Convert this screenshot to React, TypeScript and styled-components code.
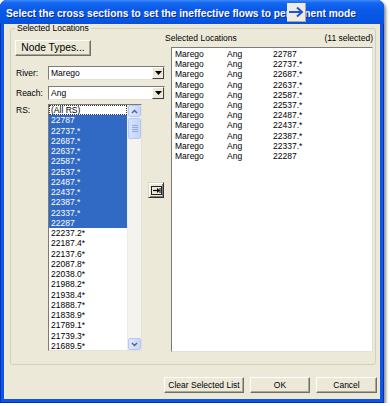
import React from "react";
import styled, { createGlobalStyle } from "styled-components";

const GlobalStyle = createGlobalStyle`
  * { box-sizing: border-box; }
  html, body { margin: 0; padding: 0; background: #ffffff; }
  body { font-family: "Liberation Sans", Arial, sans-serif; color: #000; }
`;

const xpBlue = "#0a56e6";
const face = "#ece9d8";

const Window = styled.div`
  position: relative;
  width: 384px;
  height: 403px;
  display: flex;
  flex-direction: column;
  background: ${xpBlue};
  border-radius: 7px 7px 0 0;
  box-shadow: inset 1px 0 #0b2fa8, inset -1px 0 #0b2fa8, inset 0 -1px #0b2fa8,
    2px 2px 3px rgba(0, 0, 0, 0.45);
`;

const TitleBar = styled.div`
  height: 24px;
  padding: 4px 0 0 6px;
  border-radius: 7px 7px 0 0;
  background: linear-gradient(
    #3d8cff 0%,
    #1567f0 12%,
    #0a5ae8 40%,
    #0656e4 80%,
    #0a4fd6 100%
  );
  color: #fff;
  font-size: 10.2px;
  font-weight: bold;
  line-height: 20px;
  white-space: nowrap;
  text-shadow: 1px 1px #0a2a9a;
`;

const TitleArrow = styled.div`
  position: absolute;
  left: 287px;
  top: 3px;
  width: 19px;
  height: 19px;
  display: flex;
  align-items: center;
  justify-content: center;
  background: #eeece3;
  border-right: 1px solid #a8a69b;
  border-bottom: 1px solid #a8a69b;
`;

const Client = styled.div`
  flex: 1;
  margin: 0 4px 4px 4px;
  padding: 0 3px 6px 6px;
  background: ${face};
  display: flex;
  flex-direction: column;
`;

const Group = styled.fieldset`
  flex: 1;
  margin: 0 1px 0 0;
  padding: 0 2px 12px 4px;
  min-width: 0;
  border: 1px solid #d0d0bf;
  border-radius: 3px;
  display: flex;
  flex-direction: column;
`;

const Legend = styled.legend`
  padding: 0 2px;
  font-size: 8.5px;
  line-height: 9px;
`;

const Inner = styled.div`
  flex: 1;
  display: flex;
`;

const LeftPanel = styled.div`
  width: 150px;
  display: flex;
  flex-direction: column;
`;

const RightPanel = styled.div`
  flex: 1;
  display: flex;
  flex-direction: column;
`;

const Button = styled.button<{ $w: number; $big?: boolean }>`
  width: ${(p) => p.$w}px;
  height: 16px;
  padding: 0;
  margin: 0;
  font-family: "Liberation Sans", Arial, sans-serif;
  font-size: ${(p) => (p.$big ? "10.3px" : "8.5px")};
  line-height: 14px;
  color: #000;
  background: ${face};
  border: 1px solid;
  border-color: #ffffff #716f64 #716f64 #ffffff;
  box-shadow: inset -1px -1px #aca899;
`;

const NodeButton = styled(Button)`
  margin-top: 7px;
`;

const FieldRow = styled.div<{ $gap: number }>`
  display: flex;
  align-items: center;
  height: 14px;
  margin-top: ${(p) => p.$gap}px;
`;

const Label = styled.div`
  width: 33px;
  padding-left: 1px;
  font-size: 8.5px;
  line-height: 10px;
`;

const Combo = styled.div`
  width: 117px;
  height: 14px;
  display: flex;
  align-items: center;
  background: #fff;
  border: 1px solid;
  border-color: #7b7b7b #e4e2d8 #e4e2d8 #7b7b7b;
`;

const ComboText = styled.div`
  flex: 1;
  padding-left: 2px;
  font-size: 8.5px;
  line-height: 12px;
`;

const ComboButton = styled.div`
  width: 12px;
  height: 12px;
  display: flex;
  align-items: center;
  justify-content: center;
  background: ${face};
  border: 1px solid;
  border-color: #ffffff #404040 #404040 #ffffff;
`;

const RsRow = styled.div`
  display: flex;
  align-items: flex-start;
  margin-top: 4px;
`;

const RsLabel = styled(Label)`
  margin-top: 1px;
`;

const ListBox = styled.div<{ $h?: number }>`
  display: flex;
  background: #fff;
  border: 1px solid;
  border-color: #7b7b7b #e4e2d8 #e4e2d8 #7b7b7b;
  ${(p) => (p.$h ? `height: ${p.$h}px;` : "")}
`;

const LeftList = styled(ListBox)`
  width: 94px;
`;

const Items = styled.div`
  flex: 1;
  display: flex;
  flex-direction: column;
`;

const Item = styled.div<{ $sel?: boolean; $focus?: boolean }>`
  height: 10.25px;
  padding-left: 2px;
  font-size: 8.5px;
  line-height: 10.25px;
  white-space: nowrap;
  color: ${(p) => (p.$sel ? "#fff" : "#000")};
  background: ${(p) => (p.$sel ? "#316ac5" : "transparent")};
  outline: ${(p) => (p.$focus ? "1px dotted #333" : "none")};
  outline-offset: -1px;
`;

const ScrollBar = styled.div`
  width: 14px;
  display: flex;
  flex-direction: column;
  background: #f4f3ee;
  border-left: 1px solid #eeede5;
`;

const ScrollBtn = styled.div`
  height: 12px;
  display: flex;
  align-items: center;
  justify-content: center;
  background: linear-gradient(90deg, #dfe8fd, #c6d5fb);
  border: 1px solid #b5c8f4;
  border-radius: 2px;
`;

const Thumb = styled.div`
  height: 21px;
  margin-top: 1px;
  display: flex;
  flex-direction: column;
  align-items: center;
  justify-content: center;
  gap: 1px;
  background: linear-gradient(90deg, #d6e2fd, #c3d3fb);
  border: 1px solid #b5c8f4;
  border-radius: 2px;
`;

const Grip = styled.div`
  width: 6px;
  height: 1px;
  background: #8fa8e3;
`;

const Track = styled.div`
  flex: 1;
`;

const MoveButton = styled.div`
  width: 16px;
  height: 16px;
  margin: 78px 0 0 6px;
  display: flex;
  align-items: center;
  justify-content: center;
  background: ${face};
  border: 1px solid;
  border-color: #d8d6cc #303030 #303030 #d8d6cc;
  box-shadow: inset 1px 1px #fff, inset -1px -1px #808080;
`;

const RightHeader = styled.div`
  display: flex;
  justify-content: space-between;
  height: 10px;
  font-size: 8.5px;
  line-height: 10px;
`;

const RightList = styled(ListBox)`
  flex: 1;
  margin: 4px 0 0 6px;
  padding-top: 1px;
  flex-direction: column;
`;

const LocRow = styled.div`
  display: grid;
  grid-template-columns: 52px 46px 1fr;
  height: 10.2px;
  padding-left: 3px;
  font-size: 8.5px;
  line-height: 10.2px;
  white-space: nowrap;
`;

const ButtonRow = styled.div`
  display: flex;
  justify-content: flex-end;
  gap: 6px;
  margin-top: 12px;
`;

const selected = [
  "22787",
  "22737.*",
  "22687.*",
  "22637.*",
  "22587.*",
  "22537.*",
  "22487.*",
  "22437.*",
  "22387.*",
  "22337.*",
  "22287",
];

const others = [
  "22237.2*",
  "22187.4*",
  "22137.6*",
  "22087.8*",
  "22038.0*",
  "21988.2*",
  "21938.4*",
  "21888.7*",
  "21838.9*",
  "21789.1*",
  "21739.3*",
  "21689.5*",
];

const DownTriangle = () => (
  <svg width="7" height="4" viewBox="0 0 7 4">
    <polygon points="0,0 7,0 3.5,4" fill="#000" />
  </svg>
);

const Chevron = ({ up }: { up?: boolean }) => (
  <svg width="7" height="5" viewBox="0 0 7 5">
    <polyline
      points={up ? "1,4 3.5,1.5 6,4" : "1,1 3.5,3.5 6,1"}
      fill="none"
      stroke="#4d6185"
      strokeWidth="1.4"
    />
  </svg>
);

const App = () => {
  return (
    <>
      <GlobalStyle />
      <Window>
        <TitleBar>
          Select the cross sections to set the ineffective flows to permanent mode
        </TitleBar>
        <TitleArrow>
          <svg width="16" height="12" viewBox="0 0 16 12">
            <line x1="1" y1="6" x2="14" y2="6" stroke="#1c55d8" strokeWidth="2" />
            <polyline points="9,1.5 14,6 9,10.5" fill="none" stroke="#1c55d8" strokeWidth="2" />
          </svg>
        </TitleArrow>
        <Client>
          <Group>
            <Legend>Selected Locations</Legend>
            <Inner>
              <LeftPanel>
                <NodeButton $w={76} $big>
                  Node Types...
                </NodeButton>
                <FieldRow $gap={10}>
                  <Label>River:</Label>
                  <Combo>
                    <ComboText>Marego</ComboText>
                    <ComboButton>
                      <DownTriangle />
                    </ComboButton>
                  </Combo>
                </FieldRow>
                <FieldRow $gap={6}>
                  <Label>Reach:</Label>
                  <Combo>
                    <ComboText>Ang</ComboText>
                    <ComboButton>
                      <DownTriangle />
                    </ComboButton>
                  </Combo>
                </FieldRow>
                <RsRow>
                  <RsLabel>RS:</RsLabel>
                  <LeftList $h={247}>
                    <Items>
                      <Item $focus>(All RS)</Item>
                      {selected.map((s) => (
                        <Item key={s} $sel>
                          {s}
                        </Item>
                      ))}
                      {others.map((s) => (
                        <Item key={s}>{s}</Item>
                      ))}
                    </Items>
                    <ScrollBar>
                      <ScrollBtn>
                        <Chevron up />
                      </ScrollBtn>
                      <Thumb>
                        <Grip />
                        <Grip />
                        <Grip />
                        <Grip />
                      </Thumb>
                      <Track />
                      <ScrollBtn>
                        <Chevron />
                      </ScrollBtn>
                    </ScrollBar>
                  </LeftList>
                  <MoveButton>
                    <svg width="11" height="9" viewBox="0 0 11 9">
                      <rect x="0.5" y="0.5" width="10" height="8" fill="none" stroke="#222" />
                      <line x1="2" y1="4.5" x2="6.5" y2="4.5" stroke="#000" strokeWidth="1.2" />
                      <polygon points="6,2 9,4.5 6,7" fill="#000" />
                      <line x1="9" y1="2" x2="9" y2="7" stroke="#000" />
                    </svg>
                  </MoveButton>
                </RsRow>
              </LeftPanel>
              <RightPanel>
                <RightHeader>
                  <span>Selected Locations</span>
                  <span>(11 selected)</span>
                </RightHeader>
                <RightList>
                  {selected.map((s) => (
                    <LocRow key={s}>
                      <span>Marego</span>
                      <span>Ang</span>
                      <span>{s}</span>
                    </LocRow>
                  ))}
                </RightList>
              </RightPanel>
            </Inner>
          </Group>
          <ButtonRow>
            <Button $w={80}>Clear Selected List</Button>
            <Button $w={60}>OK</Button>
            <Button $w={61}>Cancel</Button>
          </ButtonRow>
        </Client>
      </Window>
    </>
  );
};

export default App;
